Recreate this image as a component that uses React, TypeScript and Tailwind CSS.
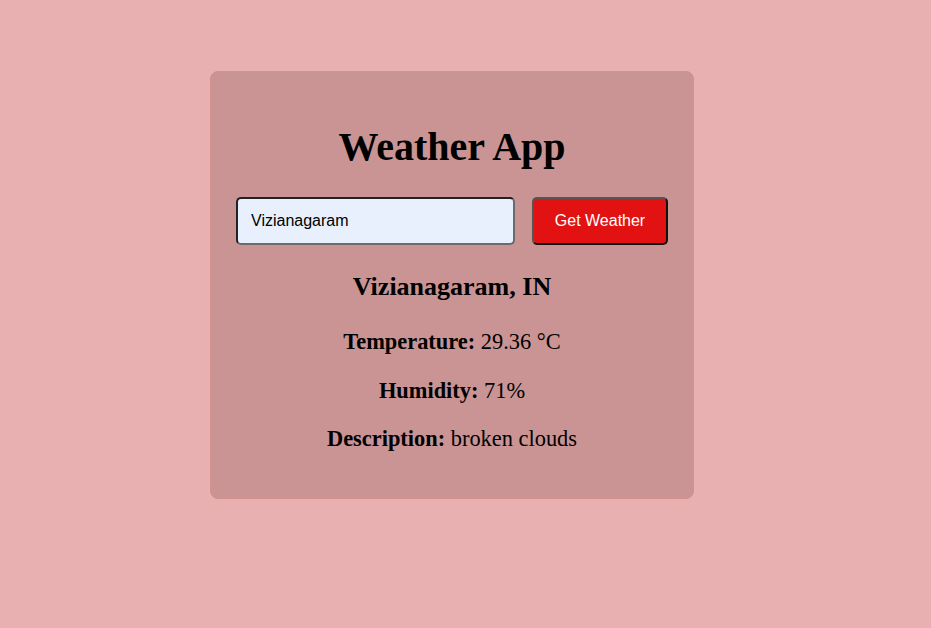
import React, { useState } from 'react';

const App: React.FC = () => {
  const [city, setCity] = useState('Vizianagaram');

  return (
    <div className="min-h-[628px] w-full bg-[#e8b0b0] pt-[71px] pl-[210px] font-['Liberation_Serif',serif] text-black">
      <div className="w-[484px] h-[428px] rounded-lg border border-[#d48f8f] bg-[#ca9494] px-[25px] flex flex-col items-center">
        {/* Title */}
        <h1 className="mt-[52px] text-[40px] leading-[46px] font-bold">Weather App</h1>

        {/* Search */}
        <div className="mt-[27px] flex w-full items-center gap-[17px]">
          <input
            value={city}
            onChange={(e) => setCity(e.target.value)}
            className="h-[48px] w-[279px] rounded-[5px] border-2 border-t-[#222] border-l-[#222] border-b-[#6b6b6b] border-r-[#6b6b6b] bg-[#e8f0fe] px-[13px] font-['Liberation_Sans',sans-serif] text-[16px] text-black outline-none"
          />
          <button className="h-[48px] w-[136px] rounded-[5px] border-2 border-t-[#555] border-l-[#555] border-b-[#111] border-r-[#111] bg-[#e31212] font-['Liberation_Sans',sans-serif] text-[16px] text-white">
            Get Weather
          </button>
        </div>

        {/* Result */}
        <h2 className="mt-[27px] text-[26px] leading-[30px] font-bold">Vizianagaram, IN</h2>
        <p className="mt-[27px] text-[22.4px] leading-[26px]">
          <b>Temperature:</b> 29.36 °C
        </p>
        <p className="mt-[22.5px] text-[22.4px] leading-[26px]">
          <b>Humidity:</b> 71%
        </p>
        <p className="mt-[22.5px] text-[22.4px] leading-[26px]">
          <b>Description:</b> broken clouds
        </p>
      </div>
    </div>
  );
};

export default App;
